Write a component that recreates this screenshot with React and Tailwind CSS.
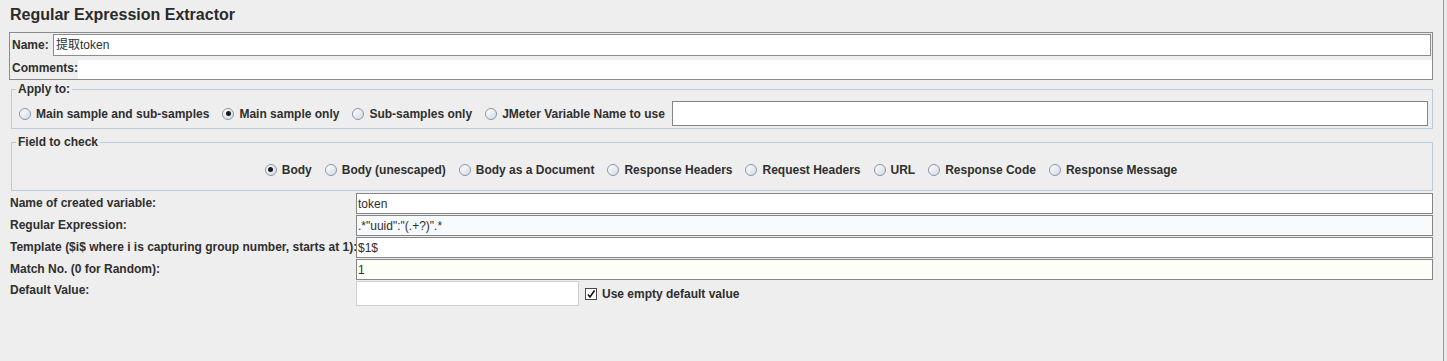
import React from "react";

const FONT = { fontFamily: '"Liberation Sans", Arial, "Noto Sans CJK SC", sans-serif' };

// Swing-style radio button
const Radio = ({ checked, label }) => (
  <label className="flex items-center gap-[5px] whitespace-nowrap">
    <span className="w-[12px] h-[12px] rounded-full border border-[#8796a8] bg-linear-to-br from-white to-[#d2dae4] flex items-center justify-center shrink-0">
      {checked && <span className="w-[5px] h-[5px] rounded-full bg-[#1c1c1c]" />}
    </span>
    <span>{label}</span>
  </label>
);

const Field = ({ value, className = "" }) => (
  <div
    className={`h-[21px] border border-[#858585] flex items-center pl-[1px] font-normal text-[12px] text-[#2e2e2e] whitespace-nowrap overflow-hidden ${className}`}
  >
    {value}
  </div>
);

const ROWS = [
  { label: "Name of created variable:", value: "token", bg: "bg-white" },
  { label: "Regular Expression:", value: '.*"uuid":"(.+?)".*', bg: "bg-[#f8fbfd]" },
  {
    label: "Template ($i$ where i is capturing group number, starts at 1):",
    value: "$1$",
    bg: "bg-white",
  },
  { label: "Match No. (0 for Random):", value: "1", bg: "bg-[#fefef8]" },
];

const APPLY = [
  { label: "Main sample and sub-samples" },
  { label: "Main sample only", checked: true },
  { label: "Sub-samples only" },
  { label: "JMeter Variable Name to use" },
];

const FIELDS = [
  { label: "Body", checked: true },
  { label: "Body (unescaped)" },
  { label: "Body as a Document" },
  { label: "Response Headers" },
  { label: "Request Headers" },
  { label: "URL" },
  { label: "Response Code" },
  { label: "Response Message" },
];

export default function App() {
  return (
    <div
      style={FONT}
      className="w-[1447px] h-[361px] bg-[#eeeeee] flex text-[#2f2f2f] text-[12px] font-bold leading-[14px] overflow-hidden"
    >
      {/* ── Main panel ── */}
      <div className="w-[1443px] flex flex-col">
        {/* Title */}
        <div className="h-[32px] pt-[5px] pl-[10px] text-[16px] leading-[20px] text-[#2a2a2a]">
          Regular Expression Extractor
        </div>

        {/* Name / Comments box */}
        <div className="ml-[9px] w-[1424px] border border-[#8a8a8a] flex flex-col">
          <div className="flex items-center h-[23px] pt-[1px]">
            <span className="pl-[2px] w-[42px]">Name:</span>
            <div className="ml-[1px] w-[1378px] h-[22px] bg-white border border-[#8d8d8d] flex items-center pl-[2px] font-normal text-[12px] text-[#2e2e2e]">
              提取token
            </div>
          </div>
          <div className="flex items-center h-[23px]">
            <span className="pl-[2px] w-[68px] pt-[1px]">Comments:</span>
            <div className="flex-1 h-[19px] mt-[4px] bg-white" />
          </div>
        </div>

        {/* Apply to */}
        <fieldset className="ml-[11px] w-[1422px] min-w-0 mt-[2px] border border-[#bccbd9] pl-[4px] pr-[4px] pb-[2px]">
          <legend className="px-[2px] leading-[14px]">Apply to:</legend>
          <div className="ml-[3px] mt-[5px] h-[25px] flex items-center gap-[13px]">
            {APPLY.map((a) => (
              <Radio key={a.label} checked={a.checked} label={a.label} />
            ))}
            <div className="ml-[-6px] flex-1 min-w-0 h-[25px] bg-white border border-[#858585]" />
          </div>
        </fieldset>

        {/* Field to check */}
        <fieldset className="ml-[11px] w-[1422px] min-w-0 mt-[6px] border border-[#bccbd9] pl-[4px]">
          <legend className="px-[2px] leading-[14px]">Field to check</legend>
          <div className="h-[41px] flex items-center justify-center gap-[13px] pr-[6px]">
            {FIELDS.map((f) => (
              <Radio key={f.label} checked={f.checked} label={f.label} />
            ))}
          </div>
        </fieldset>

        {/* Variable rows */}
        <div className="mt-[2px] flex flex-col gap-[1px]">
          {ROWS.map((r) => (
            <div key={r.label} className="flex items-start">
              <span className="w-[356px] shrink-0 pl-[10px] pt-[3px] whitespace-nowrap">{r.label}</span>
              <Field value={r.value} className={`w-[1077px] ${r.bg}`} />
            </div>
          ))}
          <div className="flex items-center">
            <span className="w-[356px] shrink-0 pl-[10px] self-start pt-[2px]">Default Value:</span>
            <div className="w-[223px] h-[25px] bg-white border border-[#d0d0d0]" />
            <div className="ml-[6px] w-[12px] h-[12px] border border-[#4a4a4a] bg-white flex items-center justify-center">
              <svg width="10" height="10" viewBox="0 0 10 10">
                <path d="M2 5.5 L4 8 L8.5 1.5" fill="none" stroke="#111" strokeWidth="1.6" />
              </svg>
            </div>
            <span className="ml-[5px]">Use empty default value</span>
          </div>
        </div>
      </div>

      {/* right edge separator */}
      <div className="w-[1px] bg-[#9c9c9c]" />
      <div className="flex-1 bg-[#e9e9e9]" />
    </div>
  );
}
